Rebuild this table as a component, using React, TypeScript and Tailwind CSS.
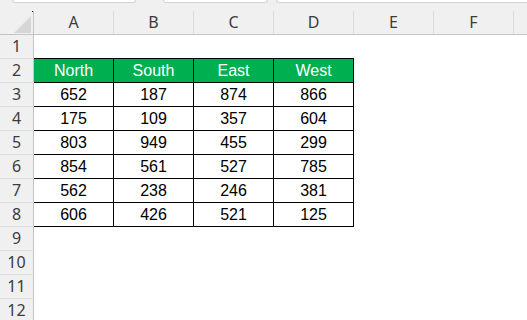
import React from 'react';

const COLS = ['A', 'B', 'C', 'D', 'E', 'F'];
const HEAD = ['North', 'South', 'East', 'West'];
const DATA = [
  [652, 187, 874, 866],
  [175, 109, 357, 604],
  [803, 949, 455, 299],
  [854, 561, 527, 785],
  [562, 238, 246, 381],
  [606, 426, 521, 125],
];

const RowHead: React.FC<{ n: number }> = ({ n }) => (
  <div className="w-[34px] shrink-0 h-full bg-[#f0f0f0] border-r border-b border-r-[#c4c4c4] border-b-[#dcdcdc] text-center leading-[23px] text-[16px] text-[#3c3c3c] font-['Noto_Sans',sans-serif]">
    {n}
  </div>
);

const App: React.FC = () => {
  const rows = Array.from({ length: 12 }, (_, i) => i + 1);

  return (
    <div className="w-[527px] h-[320px] overflow-hidden bg-white font-['Liberation_Sans',Arial,sans-serif]">
      {/* tab strip on top */}
      <div className="h-[11px] bg-[#f0f0f0] flex items-start">
        <div className="ml-[12px] w-[124px] h-[3px] bg-white border border-t-0 border-[#d2d2d2] rounded-b-[4px]" />
        <div className="ml-[27px] w-[105px] h-[3px] bg-white border border-t-0 border-[#d2d2d2] rounded-b-[4px]" />
        <div className="ml-[8px] flex-1 h-[3px] bg-white border border-t-0 border-r-0 border-[#d2d2d2] rounded-bl-[4px]" />
      </div>

      {/* column headers */}
      <div className="flex h-[24px] bg-[#f0f0f0] border-b border-[#c4c4c4]">
        <div className="relative w-[34px] shrink-0 border-r border-[#c4c4c4]">
          <svg className="absolute left-[14px] top-[5px]" width="17" height="17" viewBox="0 0 17 17">
            <polygon points="17,0 17,17 0,17" fill="#d6d6d6" />
          </svg>
          <div className="absolute right-0 top-0 w-px h-px bg-black" />
        </div>
        {COLS.map(c => (
          <div key={c} className="w-[80px] shrink-0 border-r border-[#dcdcdc] text-center leading-[23px] text-[16px] text-[#3c3c3c] font-['Noto_Sans',sans-serif]">
            {c}
          </div>
        ))}
      </div>

      {rows.map(r => (
        <div key={r} className="flex h-[24px]">
          <RowHead n={r} />
          {r === 1 &&
            HEAD.map(h => <div key={h} className="w-[80px] shrink-0 border-b border-black" />)}
          {r === 2 &&
            HEAD.map(h => (
              <div key={h} className="w-[80px] shrink-0 bg-[#00b050] border-r border-b border-black text-white text-center leading-[23px] text-[16px]">
                {h}
              </div>
            ))}
          {r >= 3 && r <= 8 &&
            DATA[r - 3].map((v, i) => (
              <div key={i} className="w-[80px] shrink-0 border-r border-b border-black text-black text-center leading-[23px] text-[16px]">
                {v}
              </div>
            ))}
        </div>
      ))}
    </div>
  );
};

export default App;
